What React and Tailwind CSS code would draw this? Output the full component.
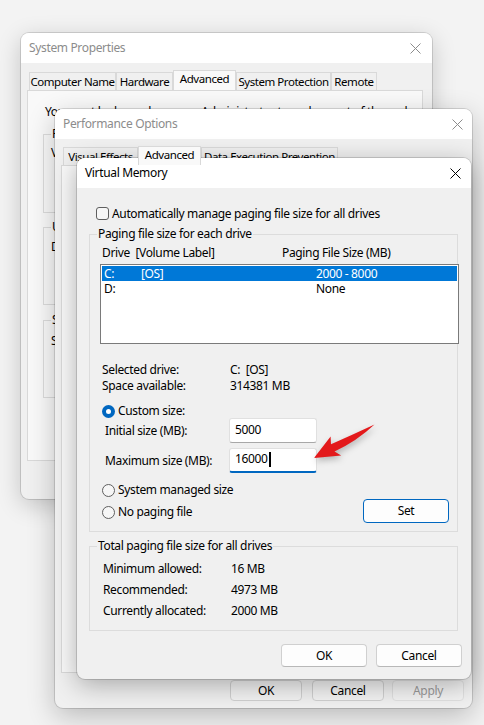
import React from "react";

function CloseX({ color = "#000" }) {
  return (
    <svg width="11" height="11" viewBox="0 0 11 11">
      <path d="M0.5 0.5L10.5 10.5M10.5 0.5L0.5 10.5" stroke={color} strokeWidth="1" />
    </svg>
  );
}

function GroupBox({ label, className = "", children }) {
  return (
    <div className={`relative shrink-0 border border-[#dcdcdc] ${className}`}>
      <span className="absolute left-[7px] -top-[9px] bg-[#f0f0f0] px-[1px] leading-[16px] whitespace-nowrap">
        {label}
      </span>
      {children}
    </div>
  );
}

function SPGroupBox({ label, className = "", children }) {
  return (
    <div className={`relative shrink-0 border border-[#dcdcdc] ${className}`}>
      <span className="absolute left-[7px] -top-[9px] bg-[#f9f9f9] px-[1px] leading-[16px] whitespace-nowrap">
        {label}
      </span>
      {children}
    </div>
  );
}

function Radio({ checked }) {
  if (checked) {
    return (
      <span className="w-[13px] h-[13px] rounded-full bg-[#0067c0] flex items-center justify-center shrink-0">
        <span className="w-[5px] h-[5px] rounded-full bg-white" />
      </span>
    );
  }
  return <span className="w-[13px] h-[13px] rounded-full border border-[#5f5f5f] bg-[#f6f6f6] shrink-0" />;
}

function Tab({ label, w, selected, h = "h-[20px]" }) {
  return (
    <div
      className={`shrink-0 flex items-center justify-center border border-b-0 border-[#d9d9d9] whitespace-nowrap overflow-hidden text-[11.5px] tracking-[-0.45px] ${
        selected ? `${h} bg-[#f9f9f9] relative z-10 pb-[3px]` : "h-[18px] bg-[#f0f0f0]"
      } ${w}`}
    >
      {label}
    </div>
  );
}

function Btn({ children, className = "" }) {
  return (
    <div className={`shrink-0 flex items-center justify-center rounded-[4px] border ${className}`}>
      {children}
    </div>
  );
}

export default function App() {
  return (
    <div className="relative w-[484px] h-[725px] overflow-hidden bg-[#f3f3f3] text-[12px] leading-[16px] tracking-[-0.35px] text-black font-['Noto_Sans',sans-serif]">
      {/* System Properties */}
      <div className="absolute left-[21px] top-[33px] w-[411px] h-[466px] rounded-[8px] bg-[#f0f0f0] overflow-hidden flex flex-col shadow-[0_0_0_1px_rgba(0,0,0,0.13),0_6px_24px_rgba(0,0,0,0.2)]">
        <div className="h-[30px] shrink-0 bg-white flex items-center justify-between pl-[8px] pr-[11px]">
          <span className="text-[#8c8c8c]">System Properties</span>
          <CloseX color="#8c8c8c" />
        </div>
        <div className="mt-[7px] ml-[8px] h-[20px] flex items-end">
          <Tab label="Computer Name" w="w-[87px]" />
          <Tab label="Hardware" w="w-[57px]" />
          <Tab label="Advanced" w="w-[63px]" selected />
          <Tab label="System Protection" w="w-[95px]" />
          <Tab label="Remote" w="w-[46px]" />
        </div>
        <div className="ml-[6px] w-[396px] h-[371px] border border-[#d9d9d9] bg-[#f9f9f9] flex flex-col overflow-hidden">
          <div className="mt-[13px] ml-[17px] whitespace-nowrap">
            You must be logged on as an Administrator to make most of these changes.
          </div>
          <SPGroupBox label="Performance" className="mt-[14px] ml-[15px] w-[362px] h-[79px]">
            <div className="mt-[10px] pl-[7px] whitespace-nowrap">
              Visual effects, processor scheduling, memory usage, and virtual memory
            </div>
          </SPGroupBox>
          <SPGroupBox label="User Profiles" className="mt-[14px] ml-[15px] w-[362px] h-[78px]">
            <div className="mt-[11px] pl-[7px] whitespace-nowrap">Desktop settings related to your sign-in</div>
          </SPGroupBox>
          <SPGroupBox label="Startup and Recovery" className="mt-[15px] ml-[15px] w-[362px] h-[78px]">
            <div className="mt-[12px] pl-[7px] whitespace-nowrap">
              System startup, system failure, and debugging information
            </div>
          </SPGroupBox>
        </div>
      </div>

      {/* Performance Options */}
      <div className="absolute left-[55px] top-[109px] w-[417px] h-[599px] rounded-[8px] bg-[#f0f0f0] overflow-hidden flex flex-col shadow-[0_0_0_1px_rgba(0,0,0,0.13),0_8px_28px_rgba(0,0,0,0.24)]">
        <div className="h-[30px] shrink-0 bg-white flex items-center justify-between pl-[8px] pr-[9px]">
          <span className="text-[#8c8c8c]">Performance Options</span>
          <CloseX color="#8c8c8c" />
        </div>
        <div className="mt-[7px] ml-[8px] h-[19px] flex items-end">
          <Tab label="Visual Effects" w="w-[75px]" />
          <Tab label="Advanced" w="w-[63px]" selected h="h-[19px]" />
          <Tab label="Data Execution Prevention" w="w-[137px]" />
        </div>
        <div className="ml-[6px] w-[405px] h-[508px] shrink-0 border border-[#d9d9d9] bg-[#f9f9f9]" />
        <div className="mt-[7px] flex justify-end pr-[8px]">
          <Btn className="w-[72px] h-[21px] bg-[#f3f3f3] border-[#d0d0d0]">OK</Btn>
          <Btn className="ml-[10px] w-[72px] h-[21px] bg-[#f3f3f3] border-[#d0d0d0]">Cancel</Btn>
          <Btn className="ml-[8px] w-[72px] h-[21px] bg-[#f3f3f3] border-[#e0e0e0] text-[#9a9a9a]">Apply</Btn>
        </div>
      </div>

      {/* Virtual Memory */}
      <div className="absolute left-[77px] top-[158px] w-[394px] h-[521px] rounded-[8px] bg-[#f0f0f0] overflow-hidden flex flex-col shadow-[0_0_0_1px_rgba(0,0,0,0.15),0_6px_26px_rgba(0,0,0,0.3)]">
        <div className="h-[30px] shrink-0 bg-white flex items-center justify-between pl-[8px] pr-[10px]">
          <span>Virtual Memory</span>
          <CloseX color="#000" />
        </div>
        <div className="mt-[19px] ml-[19px] h-[13px] flex items-center">
          <span className="w-[13px] h-[13px] rounded-[3px] border border-[#5f5f5f] bg-[#f7f7f7] shrink-0" />
          <span className="ml-[3px] whitespace-nowrap">Automatically manage paging file size for all drives</span>
        </div>

        <GroupBox label="Paging file size for each drive" className="mt-[14px] ml-[12px] w-[369px] h-[298px] flex flex-col">
          <div className="mt-[10px] pl-[12px] h-[16px] flex">
            <span className="w-[180px] whitespace-pre">Drive  [Volume Label]</span>
            <span>Paging File Size (MB)</span>
          </div>
          <div className="mt-[3px] ml-[10px] w-[359px] h-[80px] border border-[#7a7a7a] bg-white p-[1px]">
            <div className="h-[15px] flex items-center bg-[#0078d7] text-white pl-[2px]">
              <span className="w-[37px]">C:</span>
              <span className="w-[175px]">[OS]</span>
              <span>2000 - 8000</span>
            </div>
            <div className="h-[15px] flex items-center pl-[2px]">
              <span className="w-[37px]">D:</span>
              <span className="w-[175px]"></span>
              <span>None</span>
            </div>
          </div>
          <div className="mt-[18px] pl-[12px] flex h-[16px]">
            <span className="w-[128px]">Selected drive:</span>
            <span className="whitespace-pre">C:  [OS]</span>
          </div>
          <div className="pl-[12px] flex h-[16px]">
            <span className="w-[128px]">Space available:</span>
            <span>314381 MB</span>
          </div>
          <div className="mt-[10px] pl-[12px] h-[14px] flex items-center">
            <Radio checked />
            <span className="ml-[3px]">Custom size:</span>
          </div>
          <div className="pl-[15px] h-[25px] flex items-center">
            <span className="w-[124px]">Initial size (MB):</span>
            <div className="w-[88px] h-[25px] bg-white border border-[#e0e0e0] border-b-[#a8a8a8] rounded-[3px] flex items-center pl-[5px] pb-[2px]">
              5000
            </div>
          </div>
          <div className="mt-[5px] pl-[15px] h-[25px] flex items-center">
            <span className="w-[124px]">Maximum size (MB):</span>
            <div className="w-[88px] h-[25px] bg-white border border-[#e0e0e0] border-b-2 border-b-[#0067c0] rounded-[3px] flex items-center pl-[5px] pb-[2px]">
              16000
              <span className="inline-block w-[2px] h-[15px] bg-black ml-[1px]" />
            </div>
          </div>
          <div className="mt-[10px] flex">
            <div className="pl-[12px] flex flex-col">
              <div className="h-[14px] flex items-center">
                <Radio />
                <span className="ml-[3px]">System managed size</span>
              </div>
              <div className="mt-[8px] h-[14px] flex items-center">
                <Radio />
                <span className="ml-[3px]">No paging file</span>
              </div>
            </div>
            <Btn className="ml-auto mr-[8px] mt-[16px] w-[86px] h-[24px] bg-[#fdfdfd] border-[#0067c0]">Set</Btn>
          </div>
        </GroupBox>

        <GroupBox label="Total paging file size for all drives" className="mt-[14px] ml-[12px] w-[369px] h-[85px] flex flex-col">
          <div className="mt-[11px] pl-[13px] h-[21px] flex items-center">
            <span className="w-[128px]">Minimum allowed:</span>
            <span>16 MB</span>
          </div>
          <div className="pl-[13px] h-[21px] flex items-center">
            <span className="w-[128px]">Recommended:</span>
            <span>4973 MB</span>
          </div>
          <div className="pl-[13px] h-[21px] flex items-center">
            <span className="w-[128px]">Currently allocated:</span>
            <span>2000 MB</span>
          </div>
        </GroupBox>

        <div className="mt-[13px] flex justify-end pr-[9px] gap-[9px]">
          <Btn className="w-[86px] h-[23px] bg-[#fdfdfd] border-[#d0d0d0] border-b-[#b8b8b8]">OK</Btn>
          <Btn className="w-[86px] h-[23px] bg-[#fdfdfd] border-[#d0d0d0] border-b-[#b8b8b8]">Cancel</Btn>
        </div>
      </div>

      {/* Red arrow annotation */}
      <svg
        className="absolute left-[300px] top-[415px] pointer-events-none"
        width="85"
        height="55"
        viewBox="300 415 85 55"
        style={{ filter: "drop-shadow(1px 3px 3px rgba(0,0,0,0.25))" }}
      >
        <path
          d="M314 458 L330.6 436.4 L331 444.2 Q352 435 374.5 424.5 Q357 441 334.5 451.5 L341.2 455.6 Z"
          fill="#e3191b"
        />
      </svg>
    </div>
  );
}
